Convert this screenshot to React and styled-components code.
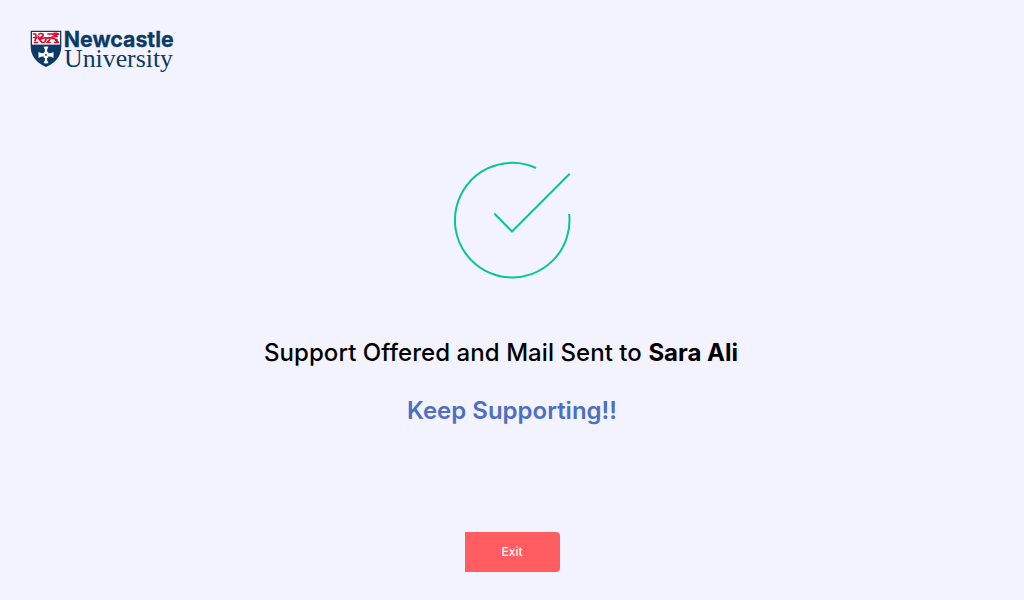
import React from "react";
import styled, { createGlobalStyle } from "styled-components";

const GlobalStyle = createGlobalStyle`
  * { box-sizing: border-box; }
  body { margin: 0; background: #f3f3ff; font-family: Inter, "Liberation Sans", sans-serif; }
`;
const Page = styled.div`
  height: 600px; width: 1024px; overflow: hidden;
  display: flex; flex-direction: column; align-items: center;
  background: #f3f3ff;
`;
const Header = styled.header`
  align-self: stretch; display: flex; gap: 2px; height: 80px; padding: 30px 0 0 30px;
`;
const Crest = styled.svg`width: 32px; height: 38px; flex: none;`;
const Wordmark = styled.svg`width: 114px; height: 46px; overflow: visible;`;
const CheckMark = styled.svg`width: 120px; height: 120px; margin-top: 80px; display: block;`;
const Message = styled.h1`
  width: 496px; margin: 58px 0 0; font-size: 24px; line-height: 30px; font-weight: 500; color: #000; white-space: nowrap;
  letter-spacing: 0.06px;
  strong { font-weight: 700; letter-spacing: 0; }
`;
const Cheer = styled.p`
  margin: 28px 0 0; font-size: 24px; line-height: 30px; font-weight: 600; color: #4f6fc0;
`;
const ExitButton = styled.button`
  margin: 106px 0 0; width: 95px; height: 40px; border: 0; padding: 0;
  border-radius: 0 4px 4px 0; background: #ff5d62; color: #fff;
  font: 500 12px/20px Inter, sans-serif;
`;

export default function App() {
  return (
    <Page>
      <GlobalStyle />
      <Header>
        <Crest viewBox="0 0 32 38">
          <path d="M.7.7h30.600v15.500q0 14-15.300 20.800Q.7 30.200.7 16.200z" fill="#0b3a66" />
          <path d="M2 2h28v12.600H2z" fill="#fff" />
          <g fill="none" stroke="#d90a2c" strokeWidth="1.700" strokeLinecap="round" strokeLinejoin="round">
            <path d="M3.500 4h2l.5 2M3.500 7.500h3L5 10.500M7.500 12.500h-3M9 4c2-1 5-.5 4 2L10 8M8 6l1 3 3 3.500h2M11 9l3-1" />
            <path d="M15 7.800h6l6 2M18 4h4l3 1.500 3.500-1.500M24 3.300h3M22 7l5-.5M16 9.500l-1 2M20 9.500l-3 3h3M25 9.500l3.500 3h-4" />
          </g>
          <path d="M13.500 16.800q2.500-.8 5 0-1.700 2.300-1.600 4.900h1.300v1.600q2.600.2 5.300-1.400v6q-2.700-1.600-5.300-1.400v1.600h-1.300q-.1 2.800 1.600 5-2.500.8-5 0 1.700-2.200 1.600-5h-1.300v-1.600q-2.600-.2-5.300 1.400v-6q2.700 1.600 5.300 1.400v-1.600h1.300q.1-2.600-1.600-4.900z" fill="#fff" />
          <circle cx="16" cy="24.900" r=".9" fill="#0b3a66" />
        </Crest>
        <Wordmark viewBox="0 0 114 46">
          <text x="-.3" y="17.300" textLength="110" lengthAdjust="spacingAndGlyphs" fontFamily="Inter" fontWeight="700" fontSize="22" fill="#0b3a66" stroke="#0b3a66" strokeWidth=".3">Newcastle</text>
          <text x="0" y="37" textLength="109" lengthAdjust="spacingAndGlyphs" fontFamily="Liberation Serif" fontSize="24.500" fill="#0b3a66">University</text>
        </Wordmark>
      </Header>
      <CheckMark viewBox="0 0 120 120" fill="none" stroke="#05c793" strokeWidth="2">
        <path d="M84 8A57.300 57.300 0 1 0 117.200 54M42.300 53.500 60 71.500 117.700 13.700" />
      </CheckMark>
      <Message>Support Offered and Mail Sent to <strong>Sara Ali</strong></Message>
      <Cheer>Keep Supporting!!</Cheer>
      <ExitButton>Exit</ExitButton>
    </Page>
  );
}
